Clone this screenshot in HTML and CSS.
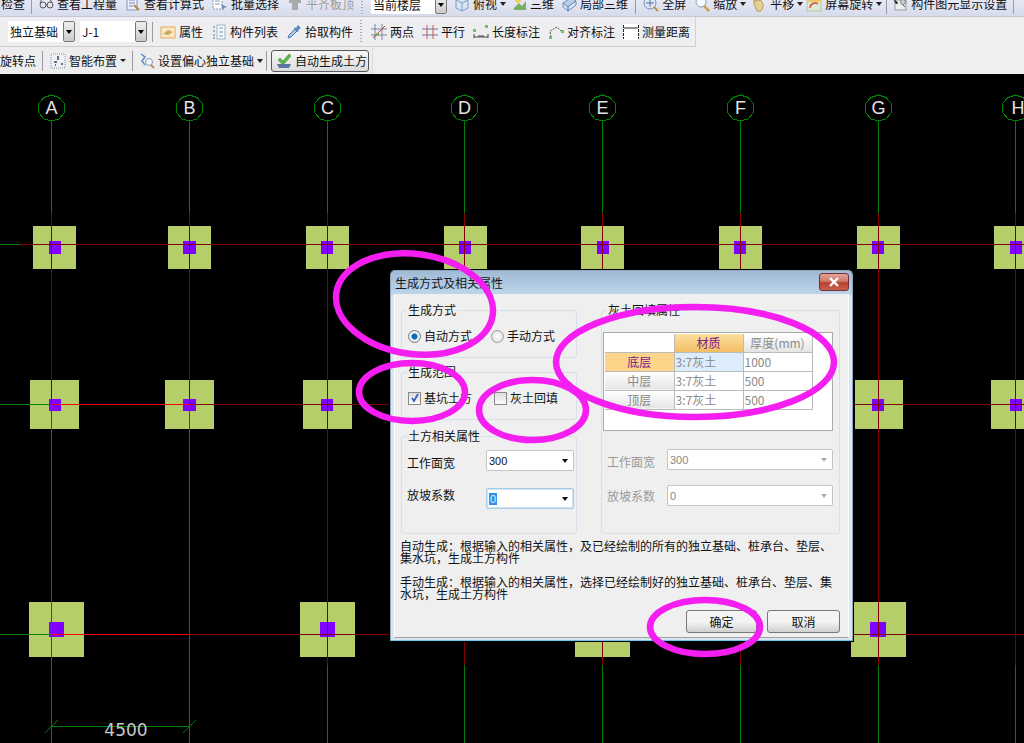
FILE: index.html
```html
<!DOCTYPE html>
<html lang="zh-CN">
<head>
<meta charset="utf-8">
<title>生成方式及相关属性</title>
<link rel="stylesheet" href="styles.css">
</head>
<body>
<div class="app">
  <header class="toolbars">
    <div class="row row1">
      <div class="viewport">
        <span class="tool m1">检查</span>
        <i class="sep m6"></i>
        <span class="tool m6"><svg class="ic" viewBox="0 0 16 16"><circle cx="5" cy="9" r="3" fill="none" stroke="#555"/><circle cx="12" cy="9" r="3" fill="none" stroke="#555"/><path d="M8 9h1M2 7l2-4M14 7l-2-4" stroke="#555" fill="none"/></svg>查看工程量</span>
        <span class="tool m8"><svg class="ic" viewBox="0 0 16 16"><rect x="2" y="1" width="10" height="13" fill="#eef" stroke="#89a"/><path d="M4 4h6M4 7h6M4 10h4" stroke="#68a"/><path d="M9 9l5 5" stroke="#b84" stroke-width="2"/></svg>查看计算式</span>
        <span class="tool m8"><svg class="ic" viewBox="0 0 16 16"><rect x="1" y="2" width="9" height="11" fill="#fff" stroke="#89a" stroke-dasharray="2 1"/><path d="M3 5h5M3 8h5" stroke="#89a"/><path d="M9 8l6 3-3 1-1 3z" fill="#6a8fc0"/></svg>批量选择</span>
        <span class="tool m8 off"><svg class="ic" viewBox="0 0 16 16"><path d="M2 4h12v3H2zM5 7h6v7H5z" fill="#aaa"/><path d="M2 4l3-3h9l-3 3z" fill="#ccc"/></svg>平齐板顶</span>
        <i class="grip m7"></i>
        <span class="combo combo-floor m8"><span class="combo-text">当前楼层</span><i class="drop"></i></span>
        <span class="tool m7"><svg class="ic" viewBox="0 0 16 16"><path d="M2 4l6-3 6 3v8l-6 3-6-3z" fill="#d7e6f4" stroke="#7f9cc0"/><path d="M8 7v8M2 4l6 3 6-3" stroke="#7f9cc0" fill="none"/></svg>俯视<i class="arrow"></i></span>
        <span class="tool m7 narrow"><svg class="ic" viewBox="0 0 14 16"><path d="M1 12l5-5 3 3 4-5v9H1z" fill="#7cae62"/><circle cx="5" cy="4" r="3" fill="#f0d060"/></svg>三维</span>
        <span class="tool m7"><svg class="ic" viewBox="0 0 16 16"><path d="M2 7l8-5 5 3-8 6z" fill="#b9cfe8" stroke="#6a8cb4"/><path d="M2 7l5 4v4l-5-4zM7 11l8-6v4l-8 6z" fill="#dfe9f5" stroke="#6a8cb4"/></svg>局部三维</span>
        <i class="sep m7"></i>
        <span class="tool m7"><svg class="ic" viewBox="0 0 16 16"><circle cx="7" cy="7" r="6" fill="#dbe6f6" stroke="#7a90b8"/><path d="M7 3v8M3 7h8" stroke="#5a70a0"/><path d="M11 11l4 4" stroke="#c09040" stroke-width="2"/></svg>全屏</span>
        <span class="tool m8"><svg class="ic" viewBox="0 0 16 16"><circle cx="7" cy="6" r="5" fill="#f4f8ff" stroke="#90a0b8"/><path d="M10 10l5 5" stroke="#c9a050" stroke-width="2.5"/></svg>缩放<i class="arrow"></i></span>
        <span class="tool m5"><svg class="ic" viewBox="0 0 16 16"><path d="M3 8V4l2 2V2l2 3V1l2 4V3l3 5v3l-2 4H6z" fill="#e5cf94" stroke="#b89a58"/></svg>平移<i class="arrow"></i></span>
        <span class="tool m3"><svg class="ic" viewBox="0 0 16 16"><rect x="1" y="3" width="14" height="12" fill="#d8ecd4" stroke="#b9c4a0"/><rect x="1" y="3" width="14" height="3" fill="#f0c860"/><path d="M4 12a5 5 0 0 1 8-4" fill="none" stroke="#d05040" stroke-width="1.5"/></svg>屏幕旋转<i class="arrow"></i></span>
        <i class="sep m4"></i>
        <span class="tool m5"><svg class="ic" viewBox="0 0 16 16"><rect x="3" y="4" width="11" height="10" fill="#eee" stroke="#99a"/><path d="M1 2l5 5-2 1zM9 7l4 4" stroke="#666"/><circle cx="11" cy="6" r="2.5" fill="#c8d8c0" stroke="#789"/></svg>构件图元显示设置</span>
        <i class="sep m6"></i>
      </div>
    </div>
    <div class="row row2">
      <span class="combo combo-type m8"><span class="combo-text">独立基础</span><i class="drop"></i></span>
      <span class="combo combo-type m5"><span class="combo-text">J-1</span><i class="drop"></i></span>
      <i class="sep m5"></i>
      <span class="tool m7"><svg class="ic" viewBox="0 0 16 16"><rect x="1" y="3" width="14" height="11" fill="#fbe9c4" stroke="#e2a860"/><path d="M3 10l5-4 5 2-5 3z" fill="#c9a860"/></svg>属性</span>
      <span class="tool m8"><svg class="ic" viewBox="0 0 16 16"><rect x="6" y="1" width="8" height="14" fill="#f4f8fc" stroke="#9fb4c8"/><path d="M8 4h4M8 8h4M8 12h4" stroke="#7f9ab4"/><path d="M2 3h2M2 7h2M2 11h2M2 14h2" stroke="#9fb4c8" stroke-width="2"/></svg>构件列表</span>
      <span class="tool m8"><svg class="ic" viewBox="0 0 16 16"><path d="M2 14l1-3 6-6 2 2-6 6z" fill="#a8c8ec" stroke="#4a78b0"/><path d="M9 3l1 1 2-3 3 3-3 2 1 1-2 1-3-3z" fill="#5a86c0"/></svg>拾取构件</span>
      <i class="grip m7"></i>
      <span class="tool m9"><svg class="ic" viewBox="0 0 16 16"><path d="M0 5h16M0 11h16M4 0v16M11 0v16" stroke="#7a80a8" fill="none"/><path d="M2 14L14 2" stroke="#c84030"/><rect x="5" y="9" width="3" height="3" fill="#7ab060"/></svg>两点</span>
      <span class="tool m8"><svg class="ic" viewBox="0 0 16 16"><path d="M0 5h16M0 11h16" stroke="#6a70a8"/><path d="M5 1v14M11 1v14" stroke="#c85848"/></svg>平行</span>
      <span class="tool m8"><svg class="ic" viewBox="0 0 16 16"><path d="M1 10v4M15 10v4M1 13h14M5 12h6" stroke="#444" fill="none"/><rect x="0" y="5" width="3" height="3" fill="#6cc070"/><rect x="12" y="1" width="3" height="3" fill="#6cc070"/></svg>长度标注</span>
      <span class="tool m8"><svg class="ic" viewBox="0 0 16 16"><path d="M3 13L2 7l7-4 5 5" stroke="#555" fill="none" stroke-dasharray="2 1"/><rect x="1" y="12" width="3" height="3" fill="#6cc070"/><rect x="13" y="6" width="3" height="3" fill="#6cc070"/></svg>对齐标注</span>
      <span class="tool m8"><svg class="ic ic-measure" viewBox="0 0 16 16"><rect width="16" height="16" fill="#fff"/><path d="M.5 1v14M15.5 1v14" stroke="#222" stroke-dasharray="3 1"/><path d="M1 4h14" stroke="#222"/></svg>测量距离</span>
    </div>
    <div class="row row3">
      <span class="tool">旋转点</span>
      <i class="sep m6"></i>
      <span class="tool m7"><svg class="ic" viewBox="0 0 16 16"><rect x="1" y="1" width="14" height="14" fill="#eef2f6" stroke="#8a9ab0" stroke-dasharray="1 1"/><path d="M8 3v4M4 9h3M11 11h2M5 12h1" stroke="#445" stroke-width="1.5"/></svg>智能布置<i class="arrow arrow-small"></i></span>
      <i class="sep m6"></i>
      <span class="tool m6"><svg class="ic" viewBox="0 0 16 16"><path d="M2 1l4 3-3 4 3 4" fill="none" stroke="#5a8cc8" stroke-width="1.5"/><circle cx="10" cy="9" r="3.5" fill="#f4f8ff" stroke="#8a9ab0"/><path d="M12 12l3 3" stroke="#c09050" stroke-width="2"/></svg>设置偏心独立基础<i class="arrow"></i></span>
      <i class="sep m3"></i>
      <button class="autobtn m4" type="button"><svg class="ic" viewBox="0 0 16 16"><path d="M1 11h14l-2 4H3z" fill="#5c74a8"/><path d="M2 7l2-2 3 3 6-7 2 2-8 9z" fill="#58b848" stroke="#2e8030" stroke-width=".5"/></svg>自动生成土方</button>
    </div>
  </header>

  <main class="canvas">
    <svg class="drawing" viewBox="0 74 1024 669" width="1024" height="669" shape-rendering="crispEdges">
      <g class="pad">
        <rect x="33" y="226" width="43" height="43"/><rect x="168" y="226" width="43" height="43"/><rect x="306" y="226" width="43" height="43"/><rect x="444" y="226" width="43" height="43"/><rect x="581" y="226" width="43" height="43"/><rect x="719" y="226" width="43" height="43"/><rect x="857" y="226" width="43" height="43"/><rect x="994" y="226" width="43" height="43"/>
        <rect x="30" y="380" width="49" height="49"/><rect x="165" y="380" width="49" height="49"/><rect x="303" y="380" width="49" height="49"/><rect x="855" y="380" width="48" height="49"/><rect x="991" y="380" width="49" height="49"/>
        <rect x="29" y="602" width="55" height="55"/><rect x="300" y="602" width="55" height="55"/><rect x="575" y="602" width="55" height="55"/><rect x="851" y="602" width="55" height="55"/>
      </g>
      <g class="col">
        <rect x="49" y="241" width="12" height="13"/><rect x="183" y="241" width="13" height="13"/><rect x="321" y="241" width="12" height="13"/><rect x="459" y="241" width="12" height="13"/><rect x="597" y="241" width="12" height="13"/><rect x="734" y="241" width="12" height="13"/><rect x="872" y="241" width="12" height="13"/><rect x="1010" y="241" width="12" height="13"/>
        <rect x="49" y="399" width="12" height="12"/><rect x="183" y="399" width="13" height="12"/><rect x="321" y="399" width="12" height="12"/><rect x="872" y="399" width="12" height="12"/><rect x="1010" y="399" width="12" height="12"/>
        <rect x="49" y="622" width="15" height="15"/><rect x="320" y="622" width="15" height="15"/><rect x="870" y="622" width="16" height="15"/>
      </g>
      <g class="green">
        <path d="M51.5 121V213M189.5 121V213M327.5 121V213M464.5 121V213M602.5 121V213M740.5 121V213M878.5 121V213M1015.5 121V213"/>
        <path d="M51.5 634V743M189.5 634V743M327.5 665V743M464.5 665V743M602.5 665V743M740.5 665V743M878.5 665V743M1015.5 665V743"/>
        <path d="M0 244.5H20M0 404.5H49M0 634.5H51"/>
        <path d="M51 726.5H189"/>
      </g>
      <g class="dark">
        <path d="M20 244.5H1024M189 404.5H390M840 404.5H1024M189 634.5H1024"/>
        <path d="M51.5 213V404M189.5 213V404M327.5 213V665M464.5 213V665M602.5 213V665M740.5 213V665M878.5 213V665M1015.5 213V665"/>
      </g>
      <g class="bright">
        <path d="M51 404.5H189M51 634.5H189M51.5 404V634M189.5 404V634"/>
      </g>
      <g class="tick">
        <path d="M45 733L58 720M183 733L196 720"/>
        <polygon points="51.5,95 59,97.5 64,103 65,108 64,113 59,119 51.5,121 44,119 39,113 38,108 39,103 44,97.5"/>
        <polygon points="189.5,95 197,97.5 202,103 203,108 202,113 197,119 189.5,121 182,119 177,113 176,108 177,103 182,97.5"/>
        <polygon points="327.5,95 335,97.5 340,103 341,108 340,113 335,119 327.5,121 320,119 315,113 314,108 315,103 320,97.5"/>
        <polygon points="464.5,95 472,97.5 477,103 478,108 477,113 472,119 464.5,121 457,119 452,113 451,108 452,103 457,97.5"/>
        <polygon points="602.5,95 610,97.5 615,103 616,108 615,113 610,119 602.5,121 595,119 590,113 589,108 590,103 595,97.5"/>
        <polygon points="740.5,95 748,97.5 753,103 754,108 753,113 748,119 740.5,121 733,119 728,113 727,108 728,103 733,97.5"/>
        <polygon points="878.5,95 886,97.5 891,103 892,108 891,113 886,119 878.5,121 871,119 866,113 865,108 866,103 871,97.5"/>
        <polygon points="1015.5,95 1023,97.5 1028,103 1029,108 1028,113 1023,119 1015.5,121 1008,119 1003,113 1002,108 1003,103 1008,97.5"/>
      </g>
      <g class="axis">
        <text x="51.5" y="114">A</text><text x="189.5" y="114">B</text><text x="327.5" y="114">C</text><text x="464.5" y="114">D</text><text x="602.5" y="114">E</text><text x="740.5" y="114">F</text><text x="878.5" y="114">G</text><text x="1018" y="114">H</text>
      </g>
      <text class="dim" x="126" y="736">4500</text>
    </svg>

    <section class="dialog">
      <div class="titlebar">
        <span class="title">生成方式及相关属性</span>
        <button class="close" type="button"><svg viewBox="0 0 12 10" width="12" height="10"><path d="M2 1l8 8M10 1L2 9" stroke="#fff" stroke-width="2.4"/></svg></button>
      </div>
      <div class="client">
        <div class="groups">
          <div class="col-left">
            <fieldset class="group g-mode">
              <legend>生成方式</legend>
              <div class="options">
                <label class="opt opt-auto"><i class="radio on"></i>自动方式</label>
                <label class="opt"><i class="radio"></i>手动方式</label>
              </div>
            </fieldset>
            <fieldset class="group g-range">
              <legend>生成范围</legend>
              <div class="options">
                <label class="opt opt-pit"><i class="check on"><svg viewBox="0 0 10 10" width="10" height="10"><path d="M2 5l2 3 4-7" fill="none" stroke="#3a5fc0" stroke-width="1.8"/></svg></i>基坑土方</label>
                <label class="opt"><i class="check"></i>灰土回填</label>
              </div>
            </fieldset>
            <fieldset class="group g-earth">
              <legend>土方相关属性</legend>
              <div class="field">
                <span class="field-label label-low">工作面宽</span>
                <span class="select"><span class="select-text">300</span><i class="tri"></i></span>
              </div>
              <div class="field field-second">
                <span class="field-label label-high">放坡系数</span>
                <span class="select focus"><span class="select-text"><b class="sel">0</b></span><i class="tri"></i></span>
              </div>
            </fieldset>
          </div>
          <fieldset class="group g-fill disabled">
            <legend>灰土回填属性</legend>
            <div class="gridbox">
              <table class="grid">
                <tr><th class="corner"></th><th class="hot">材质</th><th>厚度(mm)</th></tr>
                <tr><th class="hotrow">底层</th><td class="cur">3:7灰土</td><td>1000</td></tr>
                <tr><th>中层</th><td>3:7灰土</td><td>500</td></tr>
                <tr><th>顶层</th><td>3:7灰土</td><td>500</td></tr>
              </table>
            </div>
            <div class="field field-right">
              <span class="field-label label-low">工作面宽</span>
              <span class="select wide"><span class="select-text">300</span><i class="tri"></i></span>
            </div>
            <div class="field field-right field-right2">
              <span class="field-label">放坡系数</span>
              <span class="select wide"><span class="select-text">0</span><i class="tri"></i></span>
            </div>
          </fieldset>
        </div>
        <div class="notes">
          <p>自动生成：根据输入的相关属性，及已经绘制的所有的独立基础、桩承台、垫层、<br>集水坑，生成土方构件</p>
          <p>手动生成：根据输入的相关属性，选择已经绘制好的独立基础、桩承台、垫层、集<br>水坑，生成土方构件</p>
        </div>
        <div class="actions">
          <button class="btn" type="button">确定</button>
          <button class="btn btn-cancel" type="button">取消</button>
        </div>
      </div>
    </section>
  </main>

  <svg class="marks" viewBox="0 0 1024 743" width="1024" height="743">
    <ellipse cx="414.5" cy="304" rx="79" ry="50" transform="rotate(8 414.5 304)"/>
    <ellipse cx="412" cy="392" rx="53" ry="29"/>
    <ellipse cx="532.5" cy="410" rx="53.5" ry="30"/>
    <ellipse cx="695" cy="362" rx="139" ry="55"/>
    <ellipse cx="705" cy="627" rx="55" ry="27"/>
  </svg>
</div>
</body>
</html>
```

FILE: styles.css
```css
* { box-sizing: border-box; }
html, body { margin: 0; padding: 0; background: #000; }
body { font: 12px/14px "Noto Sans CJK SC", "Liberation Sans", sans-serif; color: #111; }
.app { position: relative; width: 1024px; height: 743px; overflow: hidden; display: flex; flex-direction: column; }

/* toolbars */
.toolbars { height: 74px; flex: none; background: #efefef; display: flex; flex-direction: column; }
.row { display: flex; align-items: center; flex: none; }
.row1 { height: 17px; width: 100%; overflow: hidden; background: linear-gradient(#e6e9f4, #d6dbeb); border-bottom: 1px solid #c4c8d2; }
.viewport { display: flex; align-items: center; height: 24px; margin-top: -8px; flex: none; align-self: flex-start; }
.row2 { height: 30px; width: 696px; background: #eeeef1; border-right: 1px solid #d2d2d6; border-bottom: 1px solid #cfcfd2; }
.row3 { height: 27px; width: 373px; background: #ededee; border-right: 1px solid #dcdcdc; }
.tool { display: inline-flex; align-items: center; gap: 3px; white-space: nowrap; flex: none; }
.off { color: #9a9a9a; }
.ic { width: 16px; height: 16px; flex: none; display: block; }
.narrow .ic { width: 14px; }
.sep { width: 1px; height: 20px; background: #9a9aa0; flex: none; display: block; }
.grip { width: 2px; height: 24px; flex: none; display: block; background: repeating-linear-gradient(#aaa 0 1px, transparent 1px 3px); }
.arrow { width: 0; height: 0; border: 3.5px solid transparent; border-top: 4px solid #222; border-bottom: 0; margin-left: 0; flex: none; display: block; }
.arrow-small { border-width: 3px; border-bottom: 0; border-top: 3px solid #222; }
.combo { display: flex; height: 21px; flex: none; background: #fff; align-items: stretch; }
.combo-text { flex: 1; padding-left: 2px; line-height: 21px; white-space: nowrap; overflow: hidden; }
.combo-floor { width: 76px; height: 20px; }
.combo-type { width: 67px; }
.drop { width: 12px; flex: none; border: 1px solid #777; border-radius: 2px; background: linear-gradient(#eee, #ccc); position: relative; display: block; }
.drop::after { content: ""; position: absolute; left: 2px; top: 8px; border: 3px solid transparent; border-top: 4px solid #000; border-bottom: 0; }
.autobtn { display: flex; align-items: center; gap: 3px; width: 98px; height: 22px; padding: 0 0 0 4px; font: inherit; color: #111; border: 1px solid #55575c; border-radius: 3px; background: linear-gradient(#f6f6f6, #dcdcdc); white-space: nowrap; }

.m1 { margin-left: 1px; } .m3 { margin-left: 3px; } .m4 { margin-left: 4px; } .m5 { margin-left: 5px; }
.m6 { margin-left: 6px; } .m7 { margin-left: 7px; } .m8 { margin-left: 8px; } .m9 { margin-left: 9px; }

/* canvas */
.canvas { position: relative; flex: 1; background: #000; }
.drawing { display: block; }
.pad rect { fill: #b5ce69; }
.col rect { fill: #8000ff; }
.green path { stroke: #008000; fill: none; }
.dark path { stroke: #800000; fill: none; }
.bright path { stroke: #ff0000; fill: none; }
.tick path, .tick polygon { stroke: #008000; fill: none; }
.axis text { fill: #e4e4e4; font: 18px "Liberation Sans", sans-serif; text-anchor: middle; }
.dim { fill: #c8c8c8; font: 17px "DejaVu Sans", sans-serif; text-anchor: middle; }

/* dialog */
.dialog { position: absolute; left: 390px; top: 196px; width: 463px; height: 371px; display: flex; flex-direction: column; padding: 0 3px 2px; border: 1px solid #8fa8c0; border-bottom-color: #6cc4e4; border-radius: 5px 5px 0 0; background: linear-gradient(#a0bad5, #bfd6ec 24px, #d6e6f2 24px); box-shadow: 0 0 0 1px #000; }
.titlebar { height: 23px; flex: none; display: flex; align-items: center; justify-content: space-between; padding: 0 0 2px 1px; }
.title { color: #101820; line-height: 18px; margin-top: 2px; }
.close { width: 30px; height: 18px; padding: 0; display: flex; align-items: center; justify-content: center; border: 1px solid #70323a; border-radius: 3px; background: linear-gradient(#e0a498 0, #d07868 45%, #b84030 55%, #c86050); }
.client { flex: 1; min-height: 0; background: #efefef; border-left: 1px solid #fff; border-right: 1px solid #fff; border-bottom: 1px solid #a0a0a0; padding: 9px 8px 0 6px; display: flex; flex-direction: column; }
.groups { display: flex; gap: 24px; flex: none; }
.col-left { width: 176px; flex: none; display: flex; flex-direction: column; }
.group { margin: 0; padding: 0 0 0 5px; min-width: 0; border: 1px solid #d6e0ea; border-radius: 3px; position: relative; }
.group legend { padding: 0 1px; height: 14px; line-height: 14px; }
.g-mode { height: 55px; }
.g-range { height: 55px; margin-top: 7px; }
.g-earth { height: 105px; margin-top: 9px; }
.g-fill { width: 240px; height: 231px; padding-left: 1px; }
.g-fill legend { margin-left: 4px; }
.disabled .field-label { color: #9a9a9a; }
.options { display: flex; align-items: center; height: 20px; margin-top: 9px; padding-left: 1px; }
.opt { display: flex; align-items: center; gap: 3px; white-space: nowrap; }
.opt-auto { width: 83px; }
.opt-pit { width: 86px; }
.radio { width: 13px; height: 13px; border-radius: 50%; border: 1px solid #9a9a9a; background: radial-gradient(#fff, #d8d8d8); display: block; flex: none; }
.radio.on { background: radial-gradient(#0a6cb8 0 2.5px, #e8eef4 3.5px); border-color: #777; }
.check { width: 13px; height: 13px; border: 1px solid #8a8a8a; background: linear-gradient(#ddd, #fafafa); display: flex; align-items: center; justify-content: center; flex: none; }
.check svg { display: block; }
.field { display: flex; align-items: center; height: 21px; margin-top: 7px; }
.field-label { width: 79px; flex: none; }
.label-low { padding-top: 4px; }
.label-high { padding-bottom: 8px; }
.field-second { margin-top: 17px; }
.select { width: 88px; height: 21px; flex: none; display: flex; align-items: center; justify-content: space-between; background: #fff; border: 1px solid #c4c4c4; border-radius: 2px; padding: 0 5px 0 2px; }
.select-text { font: 11px/14px "Liberation Sans", sans-serif; }
.sel { font-weight: 400; background: #3390e8; color: #dfefff; padding: 0 1px; }
.focus { border-color: #a8cce6; border-width: 1px; box-shadow: inset 0 0 0 1px #cfe4f4; }
.tri { width: 0; height: 0; border: 3.5px solid transparent; border-top: 4px solid #111; border-bottom: 0; display: block; }
.wide { width: 166px; }
.wide .tri { border-top-color: #aaa; }
.wide .select-text { color: #888; }
.field-right { padding-left: 4px; margin-top: 18px; }
.field-right .field-label { width: 60px; }
.field-right2 { margin-top: 15px; }
.gridbox { width: 230px; height: 99px; margin-top: 15px; background: #fff; border: 1px solid #aaa; padding: 1px 0 0 1px; }
.grid { border-collapse: collapse; table-layout: fixed; width: 207px; color: #8a8a8a; }
.grid th, .grid td { width: 69px; height: 19px; padding: 0; border: 1px solid #bbb; font-weight: 400; line-height: 14px; }
.grid tr:first-child th { height: 18px; border-top: 0; }
.grid tr th:first-child { border-left: 0; }
.grid th { text-align: center; background: linear-gradient(#fff, #e4e4e4); }
.grid .corner { background: #fff; }
.grid td { padding-left: 1px; background: #fff; font-family: "Noto Sans CJK SC", "Liberation Sans", sans-serif; }
.grid .hot { background: linear-gradient(#fbdf9e, #f3bd64); color: #7a1a8a; }
.grid .hotrow { background: #fcd48a; color: #7a1a8a; }
.grid .cur { background: #deedfb; }
.notes { margin: 6px 0 0 -1px; flex: none; }
.notes p { margin: 0 0 12px; line-height: 12px; white-space: nowrap; }
.actions { display: flex; justify-content: flex-end; gap: 10px; padding-right: 0; margin-top: -2px; }
.btn { width: 71px; height: 23px; padding: 0; font: inherit; color: #111; border: 1px solid #777; border-radius: 3px; background: linear-gradient(#f4f4f4 50%, #cfcfcf); }
.btn-cancel { width: 73px; }

/* hand-drawn review marks over the screenshot */
.marks { position: absolute; left: 0; top: 0; pointer-events: none; }
.marks ellipse { fill: none; stroke: #f41ef0; stroke-width: 6.5; }
```
